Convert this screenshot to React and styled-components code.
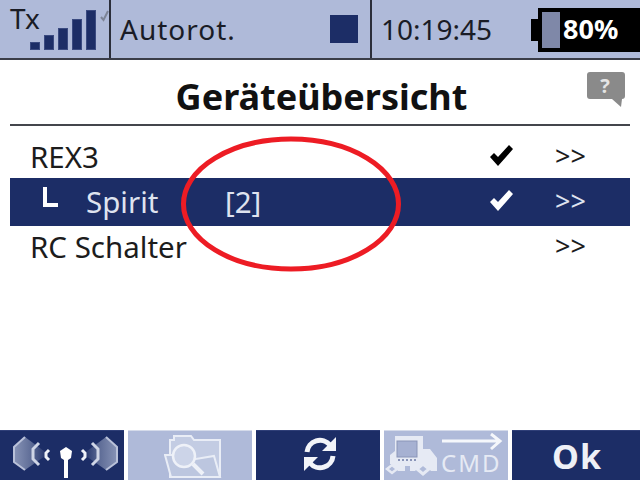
import React from 'react';
import styled, { createGlobalStyle } from 'styled-components';

const NAVY = '#1c2d66';
const PALE = '#afbad9';

const GlobalStyle = createGlobalStyle`
  html, body { margin: 0; padding: 0; background: #fff; }
  body { font-family: "Noto Sans", "Open Sans", sans-serif; }
`;

const Screen = styled.div`
  position: relative;
  width: 640px;
  height: 480px;
  overflow: hidden;
  display: flex;
  flex-direction: column;
  background: #fff;
`;

const StatusBar = styled.div`
  height: 58px;
  flex: none;
  display: flex;
  background: ${PALE};
  border-bottom: 2px solid #3a3d48;
  color: #1a1c26;
`;

const StatusCell = styled.div`
  width: ${p => p.$w}px;
  flex: none;
  display: flex;
  align-items: center;
  box-sizing: border-box;
  padding: ${p => p.$pad || '0'};
  border-right: ${p => (p.$divider ? '2px solid #2b2e3a' : 'none')};
`;

const SignalCell = styled(StatusCell)`
  align-items: flex-start;
  padding-left: 10px;
`;

const TxLabel = styled.span`
  flex: none;
  font-size: 28px;
  line-height: 1;
  margin-top: 4px;
  color: #1a1c26;
`;

const SignalBars = styled.div`
  flex: none;
  display: flex;
  align-items: flex-end;
  gap: 4px;
  height: 40px;
  margin: 10px 0 0 -10px;
`;

const Bar = styled.div`
  box-sizing: border-box;
  width: 10px;
  height: ${p => p.$h}px;
  background: ${NAVY};
  border: 1px solid #3a4a80;
`;

const TinyCheck = styled.svg`
  flex: none;
  margin: 10px 0 0 4px;
`;

const StatusText = styled.span`
  font-size: 28px;
  line-height: 1;
  letter-spacing: ${p => p.$spacing || 0}px;
`;

const ModeSquare = styled.div`
  width: 28px;
  height: 28px;
  margin-left: auto;
  background: ${NAVY};
`;

const BatteryWrap = styled.div`
  display: flex;
  align-items: center;
  height: 44px;
  margin-top: 8px;
`;

const BatteryTip = styled.div`
  width: 7px;
  height: 22px;
  background: #000;
`;

const BatteryBody = styled.div`
  width: 102px;
  height: 44px;
  background: #000;
  display: flex;
  align-items: center;
  padding-left: 4px;
  box-sizing: border-box;
`;

const BatteryLevel = styled.div`
  width: 18px;
  height: 36px;
  background: #7f88a8;
`;

const BatteryLabel = styled.span`
  color: #fff;
  font-weight: 700;
  font-size: 27px;
  margin: -3px 0 0 3px;
  line-height: 1;
`;

const Content = styled.div`
  flex: 1;
  display: flex;
  flex-direction: column;
  padding: 0 10px;
`;

const TitleRow = styled.div`
  height: 64px;
  display: flex;
  align-items: center;
  justify-content: center;
  border-bottom: 2px solid #44464c;
  position: relative;
`;

const Title = styled.h1`
  margin: 10px 0 0 3px;
  font-size: 36px;
  font-weight: 700;
  color: #111;
  line-height: 1;
`;

const HelpIcon = styled.svg`
  position: absolute;
  right: 4px;
  top: 12px;
`;

const DeviceList = styled.div`
  display: flex;
  flex-direction: column;
  margin-top: 10px;
`;

const DeviceRow = styled.div`
  height: ${p => (p.$selected ? 48 : 42)}px;
  display: flex;
  align-items: center;
  font-size: 29.5px;
  color: ${p => (p.$selected ? '#dfe3ef' : '#1c1c1c')};
  background: ${p => (p.$selected ? NAVY : 'transparent')};
  padding-left: 20px;
`;

const TreeMark = styled.span`
  width: 15px;
  height: 20px;
  margin: -10px 28px 0 13px;
  box-sizing: border-box;
  border-left: 4px solid #fff;
  border-bottom: 4px solid #fff;
  flex: none;
`;

const DeviceName = styled.span`
  width: ${p => p.$w || 'auto'};
  flex: none;
  position: relative;
  top: -1px;
`;

const Trailing = styled.div`
  margin-left: auto;
  width: 142px;
  display: flex;
  align-items: center;
`;

const CheckSlot = styled.div`
  width: 67px;
  height: 24px;
  flex: none;
  display: flex;
  align-items: center;
  margin-top: -3px;
`;

const Arrows = styled.span`
  font-size: 27px;
  line-height: 1;
  margin-top: -4px;
`;

const Annotation = styled.svg`
  position: absolute;
  left: 176px;
  top: 134px;
`;

const BottomBar = styled.div`
  height: 50px;
  flex: none;
  display: grid;
  grid-template-columns: repeat(4, 124px) 1fr;
  column-gap: 4px;
`;

const BarButton = styled.div`
  display: flex;
  align-items: center;
  justify-content: center;
  background: ${p => (p.$disabled ? PALE : NAVY)};
  border-top: 1px solid ${p => (p.$disabled ? '#d5dbea' : '#2f3f78')};
  color: #fff;
`;

const OkLabel = styled.span`
  font-size: 34px;
  font-weight: 700;
  color: #eef0f6;
  line-height: 1;
  letter-spacing: 1px;
  margin-left: 2px;
`;

const CmdLabel = styled.text`
  font-family: "Noto Sans", sans-serif;
  font-size: 24px;
  letter-spacing: 2px;
  fill: #e6eaf4;
`;

const Check = ({ color }) => (
  <CheckSlot>
    <svg width="26" height="24" viewBox="0 0 26 24">
      <path d="M2 13 L6 9 L10 13 L21 1 L25 5 L10 22 Z" fill={color} />
    </svg>
  </CheckSlot>
);

const AntennaIcon = () => (
  <svg width="124" height="49" viewBox="0 0 124 49">
    <defs>
      <linearGradient id="fadeL" x1="0" x2="1">
        <stop offset="0" stopColor="#8793b6" />
        <stop offset="0.5" stopColor="#5f6d97" />
        <stop offset="1" stopColor="#1c2d66" />
      </linearGradient>
      <linearGradient id="fadeR" x1="1" x2="0">
        <stop offset="0" stopColor="#8793b6" />
        <stop offset="0.5" stopColor="#5f6d97" />
        <stop offset="1" stopColor="#1c2d66" />
      </linearGradient>
    </defs>
    <path d="M25 6 L14 16 L14 31 L25 39 L48 23 Z" fill="url(#fadeL)" />
    <path d="M106 6 L117 16 L117 31 L106 39 L83 23 Z" fill="url(#fadeR)" />
    <g fill="none" stroke="#b9c1d9" strokeWidth="2">
      <path d="M25 6 L14 16 L14 31 L25 39" />
      <path d="M106 6 L117 16 L117 31 L106 39" />
    </g>
    <g fill="none" stroke="#cfd5e6" strokeWidth="3">
      <path d="M39 12 L33 18 L33 28 L39 34" />
      <path d="M92 12 L98 18 L98 28 L92 34" />
    </g>
    <g fill="none" stroke="#eef1f8" strokeWidth="3">
      <path d="M49 19 L46 22 L46 26 L49 29" />
      <path d="M82 19 L85 22 L85 26 L82 29" />
    </g>
    <path d="M66 16 L72 20 L71 27 L68 29 L68 47 L64 47 L64 29 L61 27 L60 20 Z" fill="#fff" />
  </svg>
);

const FolderIcon = () => (
  <svg width="60" height="46" viewBox="0 0 60 46" style={{ marginLeft: 7 }}>
    <path d="M6 44 L6 7 L10 7 L10 3 L27 3 L30 7 L56 7 L56 44 Z" fill="#c3cce3" stroke="#e9edf6" strokeWidth="2" />
    <path d="M7 44 L1 22 L22 22 L26 27 L50 23 L56 44 Z" fill="#bcc6df" stroke="#e9edf6" strokeWidth="2" />
    <circle cx="20" cy="23" r="11" fill="#ccd4e8" stroke="#eef1f8" strokeWidth="2.5" />
    <path d="M29 31 L39 41" stroke="#eef1f8" strokeWidth="4" />
  </svg>
);

const RefreshIcon = () => (
  <svg width="36" height="36" viewBox="0 0 36 36" fill="none" stroke="#f2f4f9" strokeWidth="5" style={{ marginLeft: 4, marginTop: -4 }}>
    <path d="M5 16 A13 13 0 0 1 28 9" />
    <path d="M31 20 A13 13 0 0 1 8 27" />
    <path d="M34 1 L34 15 L20 15 Z" fill="#f2f4f9" stroke="none" />
    <path d="M2 35 L2 21 L16 21 Z" fill="#f2f4f9" stroke="none" />
  </svg>
);

const CmdIcon = () => (
  <svg width="124" height="49" viewBox="0 0 124 49">
    <path d="M11 5 L39 5 L39 18 L46 18 L53 27 L53 40 L47 40 L39 32 L31 40 L14 40 L8 33 L6 33 L6 24 L11 20 Z" fill="#e6eaf4" />
    <rect x="13" y="10" width="20" height="16" fill="#a6b1d2" stroke="#8a95b8" />
    <path d="M14 29 h18" stroke="#8a95b8" strokeWidth="2" strokeDasharray="2 2" />
    <path d="M3 38 L8 34 L13 38 L8 42 Z" fill="none" stroke="#e6eaf4" strokeWidth="2.5" />
    <rect x="21" y="35" width="5" height="5" fill="#afbad9" />
    <path d="M33 38 L39 33 L45 38 L39 43 Z" fill="#afbad9" stroke="#e6eaf4" strokeWidth="3" />
    <path d="M58 10 H115 M107 3 L116 10 L107 18" fill="none" stroke="#f5f7fb" strokeWidth="3" />
    <CmdLabel x="57" y="41">CMD</CmdLabel>
  </svg>
);

const App = () => (
  <Screen>
    <GlobalStyle />
    <StatusBar>
      <SignalCell $w={111} $divider>
        <TxLabel>Tx</TxLabel>
        <SignalBars>
          <Bar $h={8} />
          <Bar $h={15} />
          <Bar $h={22} />
          <Bar $h={31} />
          <Bar $h={40} />
        </SignalBars>
        <TinyCheck width="9" height="12" viewBox="0 0 9 12">
          <path d="M1 7 L3.5 10 L8 1" fill="none" stroke="#7d8496" strokeWidth="2" />
        </TinyCheck>
      </SignalCell>
      <StatusCell $w={261} $divider $pad="0 12px 0 9px">
        <StatusText $spacing={1}>Autorot.</StatusText>
        <ModeSquare />
      </StatusCell>
      <StatusCell $w={159} $pad="0 0 0 9px">
        <StatusText>10:19:45</StatusText>
      </StatusCell>
      <BatteryWrap>
        <BatteryTip />
        <BatteryBody>
          <BatteryLevel />
          <BatteryLabel>80%</BatteryLabel>
        </BatteryBody>
      </BatteryWrap>
    </StatusBar>

    <Content>
      <TitleRow>
        <Title>Geräteübersicht</Title>
        <HelpIcon width="40" height="36" viewBox="0 0 40 36">
          <path d="M4 0 H36 Q39 0 39 3 V24 Q39 27 36 27 L35 35 L26 27 H4 Q1 27 1 24 V3 Q1 0 4 0 Z" fill="#8a8a8a" />
          <text x="19" y="21" textAnchor="middle" fontFamily="Noto Sans, sans-serif" fontWeight="700" fontSize="20" fill="#e4e4e4">?</text>
        </HelpIcon>
      </TitleRow>
      <DeviceList>
        <DeviceRow>
          <DeviceName>REX3</DeviceName>
          <Trailing>
            <Check color="#000" />
            <Arrows>&gt;&gt;</Arrows>
          </Trailing>
        </DeviceRow>
        <DeviceRow $selected>
          <TreeMark />
          <DeviceName $w="139px">Spirit</DeviceName>
          <DeviceName>[2]</DeviceName>
          <Trailing>
            <Check color="#fff" />
            <Arrows>&gt;&gt;</Arrows>
          </Trailing>
        </DeviceRow>
        <DeviceRow>
          <DeviceName>RC Schalter</DeviceName>
          <Trailing>
            <CheckSlot />
            <Arrows>&gt;&gt;</Arrows>
          </Trailing>
        </DeviceRow>
      </DeviceList>
    </Content>

    <BottomBar>
      <BarButton><AntennaIcon /></BarButton>
      <BarButton $disabled><FolderIcon /></BarButton>
      <BarButton><RefreshIcon /></BarButton>
      <BarButton $disabled><CmdIcon /></BarButton>
      <BarButton><OkLabel>Ok</OkLabel></BarButton>
    </BottomBar>

    <Annotation width="230" height="140" viewBox="0 0 230 140">
      <ellipse cx="115" cy="70" rx="107.5" ry="65" fill="none" stroke="#ed1c24" strokeWidth="5" />
    </Annotation>
  </Screen>
);

export default App;
